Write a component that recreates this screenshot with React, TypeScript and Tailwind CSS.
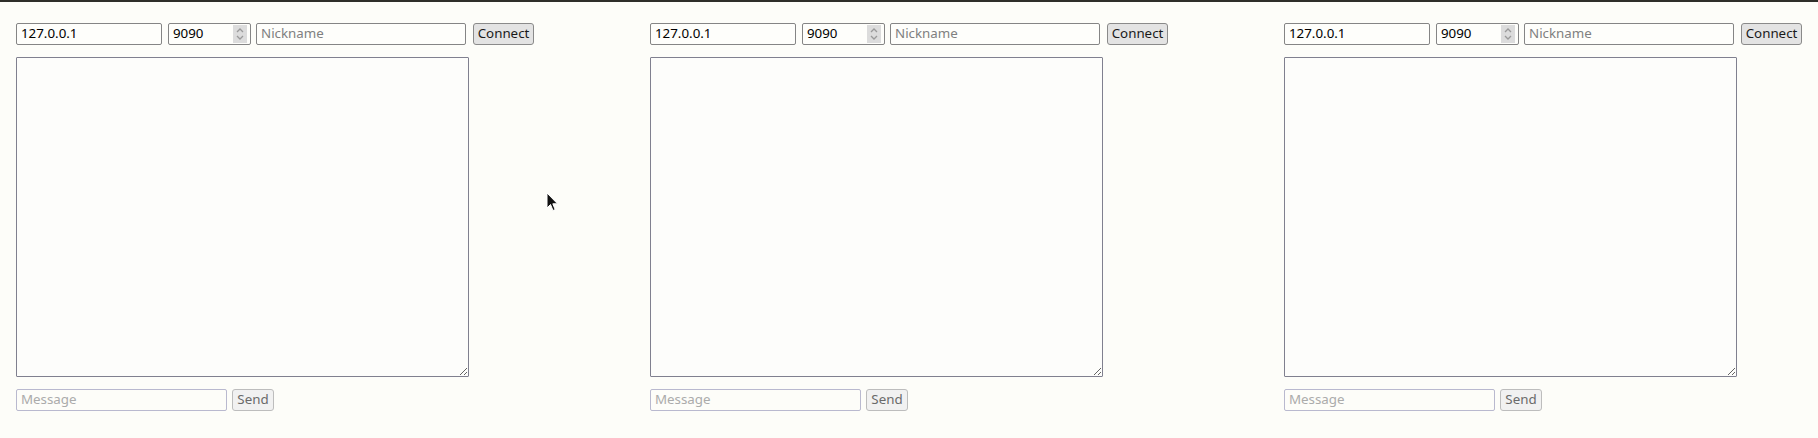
import React from "react";

function Spinner() {
  return (
    <div className="flex h-[18px] w-[18px] flex-col items-center justify-center bg-[#dcdcdc] mr-[3px]">
      <svg width="10" height="16" viewBox="0 0 10 16" fill="none" stroke="#9a9a9a" strokeWidth="1.3">
        <path d="M2 6 L5 3 L8 6" />
        <path d="M2 10 L5 13 L8 10" />
      </svg>
    </div>
  );
}

function Panel() {
  return (
    <div className="flex w-[518px] shrink-0 flex-col">
      <div className="flex h-[22px] items-stretch">
        <input
          defaultValue="127.0.0.1"
          className="w-[146px] rounded-[2px] border border-[#858585] bg-white/40 px-[4px] text-[13.33px] font-normal text-black outline-none"
        />
        <div className="ml-[6px] flex w-[83px] items-center rounded-[2px] border border-[#858585] bg-white/40">
          <input
            defaultValue="9090"
            className="w-full min-w-0 bg-transparent px-[4px] text-[13.33px] font-normal text-black outline-none"
          />
          <Spinner />
        </div>
        <input
          placeholder="Nickname"
          className="ml-[5px] w-[210px] rounded-[2px] border border-[#858585] bg-white/40 px-[4px] text-[13.33px] text-black outline-none placeholder:text-[#808080]"
        />
        <button className="ml-[7px] w-[61px] rounded-[3px] border border-[#8a8a8a] bg-[#e3e3e3] text-[13.33px] font-normal leading-none text-[#1a1a1a]">
          Connect
        </button>
      </div>
      <textarea
        className="mt-[12px] h-[320px] w-[453px] resize rounded-[1px] border border-[#80808f] bg-white/30 outline-none"
      />
      <div className="mt-[12px] flex h-[22px] items-stretch">
        <input
          disabled
          placeholder="Message"
          className="w-[211px] rounded-[2px] border border-[#b9b9cf] bg-transparent px-[4px] text-[13.33px] outline-none placeholder:text-[#ababab]"
        />
        <button
          disabled
          className="ml-[5px] w-[42px] rounded-[3px] border border-[#bdbdbd] bg-[#f1f1f1] text-[13.33px] leading-none text-[#6a6a6a]"
        >
          Send
        </button>
      </div>
    </div>
  );
}

export default function App() {
  return (
    <div
      className="relative h-[438px] w-full overflow-hidden border-t-2 border-[#2e2e2a] bg-[#fdfdf9]"
      style={{ fontFamily: '"Noto Sans", "Open Sans", sans-serif' }}
    >
      <div className="flex gap-[116px] pl-[16px] pt-[21px]">
        <Panel />
        <Panel />
        <Panel />
      </div>
      <svg
        className="absolute left-[546px] top-[190px]"
        width="13"
        height="20"
        viewBox="0 0 13 20"
      >
        <path
          d="M1 1 L1 16 L4.5 12.5 L7 18.5 L9.2 17.6 L6.8 11.8 L11.5 11.8 Z"
          fill="#111"
          stroke="#fff"
          strokeWidth="1"
          strokeLinejoin="round"
        />
      </svg>
    </div>
  );
}
